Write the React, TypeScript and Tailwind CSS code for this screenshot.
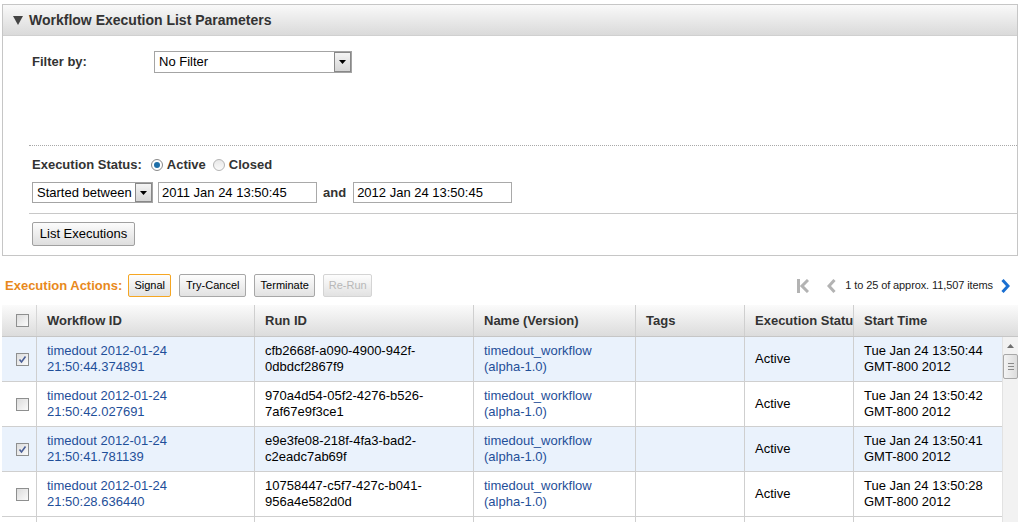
import React from "react";

type Row = {
  checked: boolean;
  wid: [string, string];
  run: [string, string];
  start: string;
};

const rows: Row[] = [
  { checked: true, wid: ["timedout 2012-01-24", "21:50:44.374891"], run: ["cfb2668f-a090-4900-942f-", "0dbdcf2867f9"], start: "Tue Jan 24 13:50:44" },
  { checked: false, wid: ["timedout 2012-01-24", "21:50:42.027691"], run: ["970a4d54-05f2-4276-b526-", "7af67e9f3ce1"], start: "Tue Jan 24 13:50:42" },
  { checked: true, wid: ["timedout 2012-01-24", "21:50:41.781139"], run: ["e9e3fe08-218f-4fa3-bad2-", "c2eadc7ab69f"], start: "Tue Jan 24 13:50:41" },
  { checked: false, wid: ["timedout 2012-01-24", "21:50:28.636440"], run: ["10758447-c5f7-427c-b041-", "956a4e582d0d"], start: "Tue Jan 24 13:50:28" },
  { checked: false, wid: ["", ""], run: ["", ""], start: "" },
];

function Checkbox({ checked }: { checked: boolean }) {
  return (
    <span className="relative inline-block w-[13px] h-[13px] border border-[#8e8f8f] bg-gradient-to-br from-[#dcdcdc] to-[#fbfbfb]">
      {checked && (
        <svg viewBox="0 0 11 11" className="absolute inset-0 w-[11px] h-[11px]">
          <path d="M2.5 5.5 L4.5 8 L8.5 2.5" fill="none" stroke="#4a5f97" strokeWidth="1.6" />
        </svg>
      )}
    </span>
  );
}

function DropArrow() {
  return (
    <span className="flex items-center justify-center w-[17px] h-full border border-[#888] bg-gradient-to-b from-[#f4f4f4] to-[#d6d6d6]">
      <svg viewBox="0 0 7 4" className="w-[7px] h-[4px]">
        <path d="M0 0 H7 L3.5 4 Z" fill="#000" />
      </svg>
    </span>
  );
}

function Btn({ label, active, disabled, w }: { label: string; active?: boolean; disabled?: boolean; w: string }) {
  return (
    <button
      className={
        "h-[23px] rounded-[2px] border text-[11px] bg-gradient-to-b from-[#fdfdfd] to-[#e2e2e2] " +
        w +
        (active ? " border-[#f5a623] text-black" : disabled ? " border-[#d4d4d4] text-[#b8b8b8]" : " border-[#a7a7a7] text-black")
      }
    >
      {label}
    </button>
  );
}

export default function App() {
  const cell = "border-r border-[#cfcfcf] pl-[10px] flex flex-col justify-center leading-[16px]";
  return (
    <div className="w-[1022px] h-[522px] overflow-hidden bg-white pt-[4px] pl-[2px] font-['Liberation_Sans',Arial,sans-serif] text-[13px] text-black">
      {/* parameters panel */}
      <section className="w-[1016px] border border-[#c6c6c6]">
        <div className="h-[31px] flex items-center pl-[10px] gap-[6px] bg-gradient-to-b from-[#f9f9f9] to-[#dadada] border-b border-[#d0d0d0]">
          <svg viewBox="0 0 10 9" className="w-[10px] h-[9px]">
            <path d="M0 0 H10 L5 9 Z" fill="#444" />
          </svg>
          <h1 className="font-bold text-[14px] text-[#333]">Workflow Execution List Parameters</h1>
        </div>
        <div className="pl-[26px]">
          <div className="mt-[15px] h-[22px] flex items-center">
            <span className="pl-[3px] w-[125px] font-bold text-[#333]">Filter by:</span>
            <div className="flex h-[22px] w-[198px] border border-[#a4a4a4]">
              <span className="flex-1 pl-[4px] flex items-center">No Filter</span>
              <DropArrow />
            </div>
          </div>
          <div className="mt-[72px] border-t border-dotted border-[#a8a8a8]" />
          <div className="mt-[9px] h-[20px] flex items-center pl-[3px] font-bold text-[#333]">
            <span>Execution Status:</span>
            <span className="ml-[9px] inline-block w-[12px] h-[12px] rounded-full border border-[#8a8a8a] bg-white relative">
              <span className="absolute left-[2px] top-[2px] w-[6px] h-[6px] rounded-full bg-[#1f6fa8]" />
            </span>
            <span className="ml-[4px]">Active</span>
            <span className="ml-[7px] inline-block w-[12px] h-[12px] rounded-full border border-[#b4b4b4] bg-gradient-to-b from-[#e8e8e8] to-[#fafafa]" />
            <span className="ml-[4px]">Closed</span>
          </div>
          <div className="mt-[7px] h-[21px] flex items-center pl-[3px]">
            <div className="flex h-[21px] w-[121px] border border-[#a4a4a4]">
              <span className="flex-1 pl-[4px] flex items-center whitespace-nowrap">Started between</span>
              <DropArrow />
            </div>
            <div className="ml-[5px] w-[159px] h-[21px] border border-[#a9a9a9] pl-[3px] flex items-center">2011 Jan 24 13:50:45</div>
            <span className="ml-[6px] font-bold text-[#333]">and</span>
            <div className="ml-[7px] w-[159px] h-[21px] border border-[#a9a9a9] pl-[3px] flex items-center">2012 Jan 24 13:50:45</div>
          </div>
          <div className="mt-[10px] border-t border-[#c8c8c8]" />
          <div className="mt-[8px] pb-[9px] pl-[3px]">
            <button className="h-[24px] w-[103px] border border-[#a0a0a0] rounded-[2px] bg-gradient-to-b from-[#fcfcfc] to-[#dedede] text-[13px]">
              List Executions
            </button>
          </div>
        </div>
      </section>

      {/* actions row */}
      <div className="mt-[18px] h-[23px] w-[1016px] flex items-center pl-[3px]">
        <span className="font-bold text-[#e8891c] mr-[6px]">Execution Actions:</span>
        <div className="flex gap-[8px]">
          <Btn label="Signal" active w="w-[43px]" />
          <Btn label="Try-Cancel" w="w-[67px]" />
          <Btn label="Terminate" w="w-[61px]" />
          <Btn label="Re-Run" disabled w="w-[49px]" />
        </div>
        <div className="ml-auto flex items-center pr-[8px]">
          <svg viewBox="0 0 12 14" className="w-[12px] h-[14px]">
            <rect x="0" y="0" width="3" height="14" fill="#b3b3b3" />
            <path d="M11 1 L5 7 L11 13" fill="none" stroke="#b3b3b3" strokeWidth="3" />
          </svg>
          <svg viewBox="0 0 9 14" className="ml-[18px] w-[9px] h-[14px]">
            <path d="M7.5 1 L2 7 L7.5 13" fill="none" stroke="#b3b3b3" strokeWidth="3" />
          </svg>
          <span className="ml-[9px] text-[11px] tracking-[-0.1px] text-[#222]">1 to 25 of approx. 11,507 items</span>
          <svg viewBox="0 0 9 14" className="ml-[8px] w-[9px] h-[14px]">
            <path d="M1.5 1 L7 7 L1.5 13" fill="none" stroke="#1a6fd1" strokeWidth="3" />
          </svg>
        </div>
      </div>

      {/* table */}
      <div className="mt-[8px] w-[1016px]">
        <div className="grid grid-cols-[35px_218px_219px_162px_109px_109px_1fr] h-[32px] bg-gradient-to-b from-[#fbfbfb] to-[#dcdcdc] border-b border-[#c6c6c6] font-bold text-[#333]">
          <div className="border-r border-[#d6d6d6] flex items-center pl-[14px]">
            <Checkbox checked={false} />
          </div>
          <div className={cell}>Workflow ID</div>
          <div className={cell}>Run ID</div>
          <div className={cell}>Name (Version)</div>
          <div className={cell}>Tags</div>
          <div className={cell + " overflow-hidden whitespace-nowrap"}>Execution Status</div>
          <div className="pl-[10px] flex items-center">Start Time</div>
        </div>
        <div className="flex">
          <div className="w-[1000px]">
            {rows.map((r, i) => (
              <div
                key={i}
                className={
                  "grid grid-cols-[35px_218px_219px_162px_109px_109px_1fr] h-[45px] border-b border-[#cfcfcf] " +
                  (r.checked ? "bg-[#eaf2fc]" : "bg-white")
                }
              >
                <div className="border-r border-[#cfcfcf] flex items-center pl-[14px]">
                  <Checkbox checked={r.checked} />
                </div>
                <div className={cell + " text-[#1f4f99]"}>
                  <span>{r.wid[0]}</span>
                  <span>{r.wid[1]}</span>
                </div>
                <div className={cell}>
                  <span>{r.run[0]}</span>
                  <span>{r.run[1]}</span>
                </div>
                <div className={cell + " text-[#1f4f99]"}>
                  {r.start && (
                    <>
                      <span>timedout_workflow</span>
                      <span>(alpha-1.0)</span>
                    </>
                  )}
                </div>
                <div className={cell} />
                <div className={cell}>{r.start && "Active"}</div>
                <div className="pl-[10px] flex flex-col justify-center leading-[16px]">
                  {r.start && (
                    <>
                      <span>{r.start}</span>
                      <span>GMT-800 2012</span>
                    </>
                  )}
                </div>
              </div>
            ))}
          </div>
          {/* scrollbar */}
          <div className="w-[16px] bg-[#f2f2f2] border-l border-[#e2e2e2] flex flex-col items-center">
            <svg viewBox="0 0 7 4" className="mt-[7px] w-[7px] h-[4px]">
              <path d="M0 4 L3.5 0 L7 4 Z" fill="#6f6f6f" />
            </svg>
            <div className="mt-[6px] w-[15px] h-[25px] rounded-[2px] border border-[#a8a8a8] bg-gradient-to-r from-[#f4f4f4] to-[#dcdcdc] flex flex-col items-center justify-center gap-[2px]">
              <span className="w-[6px] h-px bg-[#8a8a8a]" />
              <span className="w-[6px] h-px bg-[#8a8a8a]" />
              <span className="w-[6px] h-px bg-[#8a8a8a]" />
            </div>
          </div>
        </div>
      </div>
    </div>
  );
}
